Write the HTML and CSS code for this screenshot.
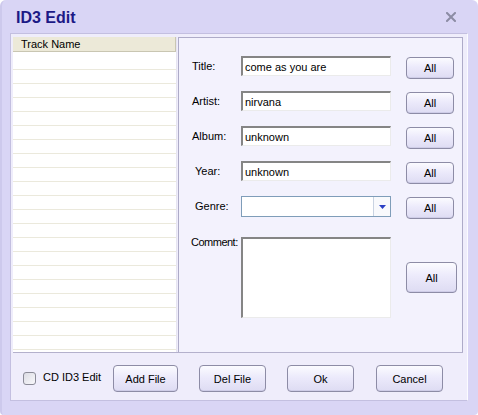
FILE: index.html
```html
<!DOCTYPE html>
<html>
<head>
<meta charset="utf-8">
<link rel="stylesheet" href="styles.css">
</head>
<body>
<div class="window">
  <div class="titlebar">
    <span class="title">ID3 Edit</span>
    <svg class="close" width="10" height="10" viewBox="0 0 10 10"><path d="M1 1 L9 9 M9 1 L1 9" stroke="#8c8ca4" stroke-width="2" stroke-linecap="square"/></svg>
  </div>
  <div class="body">
    <div class="top">
      <div class="list">
        <div class="list-head">Track Name</div>
        <div class="list-rows"></div>
      </div>
      <div class="form">
        <label class="lbl">Title:</label>
        <input class="field" type="text" value="come as you are">
        <button class="btn all">All</button>

        <label class="lbl">Artist:</label>
        <input class="field" type="text" value="nirvana">
        <button class="btn all">All</button>

        <label class="lbl">Album:</label>
        <input class="field" type="text" value="unknown">
        <button class="btn all">All</button>

        <label class="lbl lbl-in">Year:</label>
        <input class="field" type="text" value="unknown">
        <button class="btn all">All</button>

        <label class="lbl lbl-in">Genre:</label>
        <div class="combo"><span class="combo-btn"><svg width="7" height="4" viewBox="0 0 7 4"><path d="M0 0 H7 L3.5 4 Z" fill="#2a3fc4"/></svg></span></div>
        <button class="btn all">All</button>

        <label class="lbl lbl-top">Comment:</label>
        <textarea class="memo"></textarea>
        <button class="btn all all-big">All</button>
      </div>
    </div>
    <div class="bottom">
      <span class="check"></span>
      <span class="check-label">CD ID3 Edit</span>
      <button class="btn foot add">Add File</button>
      <button class="btn foot del">Del File</button>
      <button class="btn foot ok">Ok</button>
      <button class="btn foot cancel">Cancel</button>
    </div>
  </div>
</div>
</body>
</html>
```

FILE: styles.css
```css
html, body {
  margin: 0;
  padding: 0;
  background: #ffffff;
}
body {
  font-family: "Liberation Sans", Arial, sans-serif;
  font-size: 11px;
  color: #000;
}
.window {
  width: 478px;
  height: 415px;
  box-sizing: border-box;
  background: #d9d5f5;
  border-radius: 6px 6px 4px 4px;
  border-left: 2px solid #cdc9ec;
  overflow: hidden;
}
.titlebar {
  height: 33px;
  box-sizing: border-box;
  padding: 8px 22px 0 14px;
  display: flex;
  justify-content: space-between;
  align-items: flex-start;
}
.title {
  font-size: 16px;
  line-height: 20px;
  font-weight: bold;
  color: #1c1a86;
}
.close {
  margin-top: 4px;
}
.body {
  margin-left: 8px;
  width: 458px;
  height: 368px;
  box-sizing: border-box;
  background: #efedfb;
  border: 1px solid #c3bfe0;
  border-right-color: #fbfbff;
  display: flex;
  flex-direction: column;
}
.top {
  margin: 3px 4px 0 2px;
  height: 315px;
  flex: 0 0 315px;
  display: flex;
  gap: 1px;
  border-bottom: 1px solid #b4b1cc;
}
.list {
  flex: 0 0 164px;
  background: #ffffff;
  display: flex;
  flex-direction: column;
  border-right: 1px solid #e6e4f2;
  box-sizing: border-box;
}
.list-head {
  height: 15px;
  box-sizing: border-box;
  background: #ece9d8;
  border-bottom: 1px solid #c9c6b2;
  border-right: 1px solid #c9c6b2;
  padding-left: 8px;
  line-height: 14px;
}
.list-rows {
  flex: 1;
  background: repeating-linear-gradient(to bottom, #ffffff 0 13px, #ebe9dc 13px 14px);
  background-position: 0 4px;
}
.form {
  flex: 1 1 auto;
  min-width: 0;
  background: #f3f2fd;
  border: 1px solid #aeabc8;
  border-bottom: none;
  padding: 18px 0 0 13px;
  display: grid;
  grid-template-columns: 49px 165px 51px;
  grid-template-rows: 20px 20px 20px 20px 20px 81px;
  row-gap: 15px;
  align-content: start;
}
.lbl {
  align-self: center;
  white-space: nowrap;
}
.lbl-in {
  padding-left: 3px;
}
.field {
  width: 150px;
  height: 20px;
  box-sizing: border-box;
  margin: 0;
  padding: 0 0 0 2px;
  font: inherit;
  color: #000;
  background: #ffffff;
  border-style: solid;
  border-width: 2px 1px 1px 2px;
  border-color: #858585 #ebebeb #ebebeb #858585;
  outline: none;
}
.combo {
  width: 150px;
  height: 21px;
  box-sizing: border-box;
  background: #ffffff;
  border: 1px solid #7f9db9;
  display: flex;
  justify-content: flex-end;
}
.combo-btn {
  width: 16px;
  border-left: 1px solid #c9d3e2;
  background: #f8f9fc;
  display: flex;
  align-items: center;
  justify-content: center;
}
.lbl-top {
  align-self: start;
  margin-left: -1px;
  margin-top: 5px;
  letter-spacing: -0.5px;
}
.memo {
  width: 150px;
  height: 81px;
  box-sizing: border-box;
  margin: 6px 0 0 0;
  padding: 0;
  resize: none;
  background: #ffffff;
  border-style: solid;
  border-width: 2px 1px 1px 2px;
  border-color: #858585 #ebebeb #ebebeb #858585;
  outline: none;
  font: inherit;
}
.btn {
  font: inherit;
  color: #000;
  margin: 0;
  padding: 0;
  border: 1px solid #8d8ca6;
  border-radius: 4px;
  background: linear-gradient(to bottom, #fbfbff 0%, #eceafb 45%, #dedcf3 100%);
  box-shadow: inset 0 -1px 0 #cfcde8;
  cursor: default;
}
.all {
  width: 48px;
  height: 22px;
  align-self: start;
  margin-top: 1px;
}
.all-big {
  width: 51px;
  height: 31px;
  align-self: center;
  margin-top: 12px;
}
.bottom {
  flex: 1;
  display: flex;
  align-items: flex-start;
  padding: 12px 0 0 12px;
}
.check {
  width: 13px;
  height: 13px;
  box-sizing: border-box;
  border: 1px solid #8b8b98;
  border-radius: 3px;
  background: linear-gradient(135deg, #dcdce4, #f8f8fb);
  margin-top: 7px;
}
.check-label {
  margin-left: 7px;
  margin-top: 6px;
  width: 70px;
  white-space: nowrap;
}
.foot {
  height: 27px;
}
.add { width: 65px; }
.del { width: 67px; margin-left: 21px; }
.ok { width: 67px; margin-left: 21px; }
.cancel { width: 67px; margin-left: 22px; }
```
